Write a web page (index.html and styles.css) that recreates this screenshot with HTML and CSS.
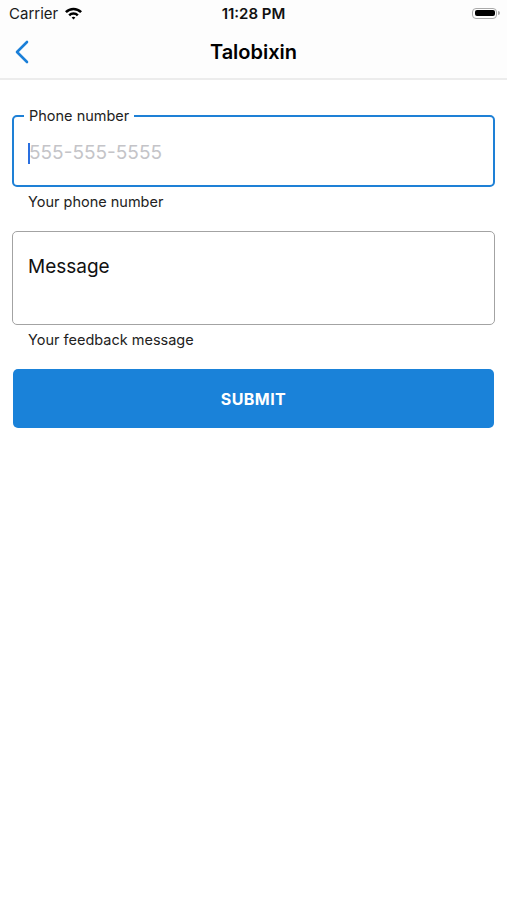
FILE: index.html
```html
<!DOCTYPE html>
<html lang="en">
<head>
    <meta charset="UTF-8">
    <meta name="viewport" content="width=device-width, initial-scale=1.0">
    <title>Talobixin</title>
    <link rel="stylesheet" href="styles.css">
</head>
<body>
    <header class="top">
        <div class="status-bar">
            <div class="carrier">
                Carrier
                <svg class="wifi" width="19" height="14" viewBox="0 0 19 14">
                    <path d="M1 5.2 A12 12 0 0 1 18 5.2 L16.2 7 A9.5 9.5 0 0 0 2.8 7 Z" fill="#000"/>
                    <path d="M4.3 8.4 A7.3 7.3 0 0 1 14.7 8.4 L12.9 10.2 A4.8 4.8 0 0 0 6.1 10.2 Z" fill="#000"/>
                    <path d="M7.6 11.6 A2.7 2.7 0 0 1 11.4 11.6 L9.5 13.5 Z" fill="#000"/>
                </svg>
            </div>
            <div class="time">11:28 PM</div>
            <div class="battery">
                <span class="battery-body"><span class="battery-fill"></span></span>
                <span class="battery-nub"></span>
            </div>
        </div>
        <nav class="nav-bar">
            <svg class="back" width="16" height="24" viewBox="0 0 16 24">
                <path d="M13 2 L3 12 L13 22" fill="none" stroke="#1a7fd8" stroke-width="2.6" stroke-linecap="round" stroke-linejoin="round"/>
            </svg>
            <h1 class="title">Talobixin</h1>
        </nav>
    </header>

    <main class="form">
        <div class="field field-active">
            <span class="field-label">Phone number</span>
            <div class="field-input">
                <span class="caret"></span><span class="placeholder">555-555-5555</span>
            </div>
        </div>
        <p class="helper">Your phone number</p>

        <div class="field field-message">
            <div class="field-input">Message</div>
        </div>
        <p class="helper">Your feedback message</p>

        <button class="submit-btn">SUBMIT</button>
    </main>
</body>
</html>
```

FILE: styles.css
```css
body {
    margin: 0;
    background: #fff;
    font-family: Inter, "Liberation Sans", sans-serif;
    color: #111;
}
.top {
    background: #fdfdfd;
    border-bottom: 2px solid #ececec;
}
.status-bar {
    height: 26px;
    display: flex;
    align-items: center;
    justify-content: space-between;
    padding: 0 7px 0 9px;
    position: relative;
}
.carrier {
    display: flex;
    align-items: center;
    gap: 6px;
    font-size: 15px;
    color: #1a1a1a;
}
.wifi {
    margin-top: -1px;
}
.time {
    position: absolute;
    left: 0;
    right: 0;
    text-align: center;
    font-size: 15px;
    font-weight: 600;
}
.battery {
    display: flex;
    align-items: center;
}
.battery-body {
    width: 25px;
    height: 11px;
    border: 1.5px solid #aaa;
    border-radius: 4px;
    padding: 1.5px;
    box-sizing: border-box;
    display: flex;
}
.battery-fill {
    flex: 1;
    background: #000;
    border-radius: 2px;
}
.battery-nub {
    width: 2px;
    height: 4px;
    background: #aaa;
    border-radius: 0 2px 2px 0;
    margin-left: 1px;
}
.nav-bar {
    height: 52px;
    display: flex;
    align-items: center;
    justify-content: center;
    position: relative;
}
.back {
    position: absolute;
    left: 14px;
    top: 14px;
}
.title {
    margin: 0;
    font-size: 20px;
    font-weight: 600;
    color: #000;
}
.form {
    padding: 35px 12px 0 12px;
}
.field {
    position: relative;
    border: 1px solid #a3a3a3;
    border-radius: 5px;
}
.field-active {
    border: 2px solid #1e80d6;
    height: 68px;
}
.field-label {
    position: absolute;
    top: -10px;
    left: 10px;
    padding: 0 5px;
    background: #fff;
    font-size: 14.5px;
    line-height: 18px;
    color: #222;
}
.field-input {
    display: flex;
    align-items: center;
    font-size: 19px;
    line-height: 24px;
    padding: 24px 14px 0 14px;
}
.placeholder {
    color: #c4c4c8;
}
.caret {
    width: 2px;
    height: 21px;
    background: #2a6fe0;
    margin-right: -1px;
}
.field-message {
    height: 92px;
}
.field-message .field-input {
    padding: 23px 15px 0 15px;
    color: #111;
}
.helper {
    margin: 6px 0 20px 16px;
    font-size: 14.5px;
    line-height: 18px;
    color: #222;
}
.submit-btn {
    display: block;
    height: 59px;
    margin: 0 1px;
    width: calc(100% - 2px);
    border: none;
    border-radius: 5px;
    background: #1a82d9;
    color: #fff;
    font-family: Inter, "Liberation Sans", sans-serif;
    font-size: 16px;
    font-weight: 700;
    letter-spacing: 0.4px;
    cursor: pointer;
}
```
